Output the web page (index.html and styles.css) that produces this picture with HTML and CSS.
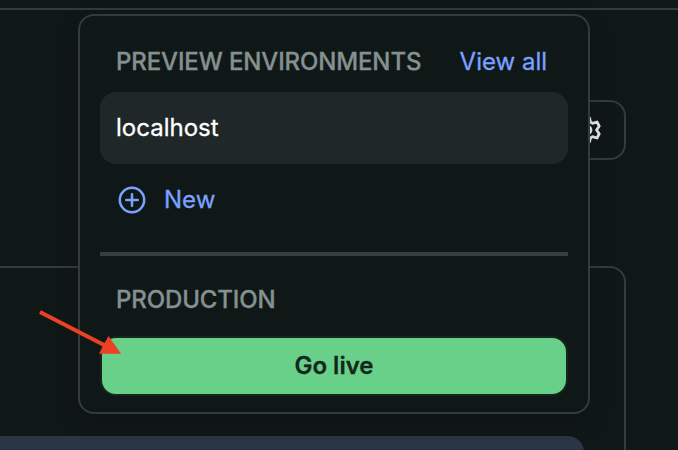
FILE: index.html
```html
<!DOCTYPE html>
<html lang="en">
<head>
<meta charset="utf-8">
<title>Environments</title>
<link rel="stylesheet" href="styles.css">
</head>
<body>
<div class="page">
  <header class="topbar"></header>
  <div class="toolbar">
    <button class="settings" aria-label="Settings">
      <svg width="30" height="30" viewBox="0 0 30 30" fill="none" stroke="#e4e8e8" stroke-width="2.8" stroke-linejoin="round">
        <path d="M13.500 3h4l1 4 2 1.300 4.500-1.300 2.200 4.200-2.700 3.800 2.700 3.800-2.200 4.200-4.500-1.300-2 1.300-1 4h-4l-1-4-2.500-1.500-4.500 1.500-2-4 3.200-4-3.200-4 2-4 4.500 1.500 2.500-1.500z"/>
        <circle cx="15" cy="15" r="4"/>
      </svg>
    </button>
  </div>
  <main class="card"><div class="banner"></div></main>
</div>
<section class="popover">
  <div class="heading"><span>PREVIEW ENVIRONMENTS</span><a class="link view-all">View all</a></div>
  <div class="environment">localhost</div>
  <a class="link new">
    <svg width="28" height="28" viewBox="0 0 28 28" fill="none" stroke="currentColor" stroke-width="2.500">
      <circle cx="14" cy="14" r="12.200"/>
      <path d="M14 8.300v11.400M8.300 14h11.400" stroke-linecap="round"/>
    </svg>
    <span>New</span>
  </a>
  <hr class="divider">
  <div class="heading production"><span>PRODUCTION</span></div>
  <button class="go-live">Go live</button>
</section>
<svg class="arrow" width="90" height="54" viewBox="0 0 90 54">
  <path d="M5 7l66 34" stroke="#ee4023" stroke-width="4"/>
  <path d="M73.500 31L86 48.700H64z" fill="#ee4023"/>
</svg>
</body>
</html>
```
FILE: styles.css
```css
* { box-sizing: border-box; }
body {
  margin: 0;
  height: 450px;
  overflow: hidden;
  position: relative;
  background: #101817;
  color: #fff;
  font: 24px/32px Inter, sans-serif;
  -webkit-text-stroke: .3px currentColor;
}
button { font: inherit; }
.page { height: 450px; overflow: hidden; }
.topbar { height: 10px; border-bottom: 2px solid #333b3b; }
.toolbar { display: flex; justify-content: flex-end; padding: 90px 52px 0 0; }
.settings {
  display: flex;
  align-items: center;
  justify-content: center;
  width: 78px;
  height: 60px;
  padding: 0;
  background: none;
  border: 2px solid #333b3b;
  border-radius: 16px;
}
.card {
  height: 240px;
  margin: 106px 52px 0 -80px;
  padding: 168px 40px 0;
  border: 2px solid #333b3b;
  border-radius: 16px;
}
.banner { height: 64px; background: #2a3646; border-radius: 16px; }
.popover {
  position: absolute;
  left: 78px;
  top: 14px;
  width: 512px;
  height: 400px;
  padding: 30px 20px 16px;
  display: flex;
  flex-direction: column;
  background: #101817;
  border: 2px solid #333b3b;
  border-radius: 16px;
  box-shadow: 0 8px 24px rgba(0, 0, 0, .16);
}
.heading {
  display: flex;
  justify-content: space-between;
  padding: 0 21px 0 16px;
  color: #859190;
  font-weight: 500;
  letter-spacing: -.13px;
}
.link { color: #7aa2ff; font-weight: 400; letter-spacing: 0; }
.environment {
  height: 72px;
  margin-top: 14px;
  padding: 20px 16px;
  background: #202728;
  border-radius: 16px;
}
.new { display: flex; align-items: center; gap: 18px; margin-top: 20px; padding-left: 18px; }
.divider { width: 100%; height: 4px; margin: 36px 0 0; border: 0; background: #363e40; flex: none; }
.production { margin-top: 28px; }
.go-live {
  height: 60px;
  margin-top: 20px;
  padding: 0;
  background: #69d08a;
  border: 2px solid #14271d;
  border-radius: 16px;
  color: #14271d;
  font-weight: 600;
}
.arrow { position: absolute; left: 35px; top: 305px; }
```
